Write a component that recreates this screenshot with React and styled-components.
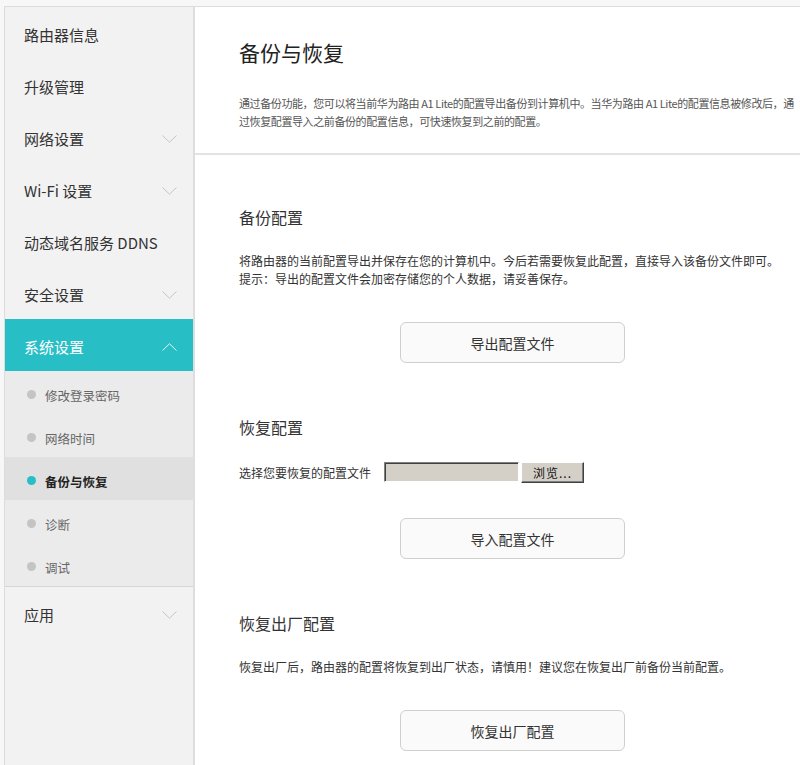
import React from "react";
import styled, { createGlobalStyle } from "styled-components";

const Global = createGlobalStyle`
  html, body { margin: 0; padding: 0; }
  body {
    background: #f7f7f7;
    font-family: "Noto Sans CJK SC", "Noto Sans", "Liberation Sans", sans-serif;
    color: #333;
    overflow: hidden;
  }
`;

const Page = styled.div`
  display: flex;
  align-items: stretch;
  padding: 6px 0 0 4px;
  min-height: 765px;
  box-sizing: border-box;
`;

const Sidebar = styled.nav`
  width: 191px;
  flex: none;
  box-sizing: border-box;
  background: #f2f2f2;
  border-top: 1px solid #dcdcdc;
  border-left: 1px solid #dcdcdc;
  border-right: 2px solid #dedede;
`;

const NavItem = styled.div`
  height: 52px;
  display: flex;
  align-items: center;
  justify-content: space-between;
  padding: 3px 16px 0 19px;
  box-sizing: border-box;
  font-size: 15px;
  color: ${(p) => (p.$active ? "#fff" : "#333")};
  background: ${(p) => (p.$active ? "#28bec6" : "transparent")};
`;

const SubList = styled.div`
  background: #ebebeb;
  border-bottom: 1px solid #d6d6d6;
`;

const SubItem = styled.div`
  height: 43px;
  box-sizing: border-box;
  padding: 5px 0 0 22px;
  display: flex;
  align-items: center;
  gap: 9px;
  font-size: 12.5px;
  color: ${(p) => (p.$active ? "#222" : "#666")};
  font-weight: ${(p) => (p.$active ? 600 : 400)};
  background: ${(p) => (p.$active ? "#e0e0e0" : "transparent")};
`;

const Dot = styled.span`
  width: 9px;
  height: 9px;
  border-radius: 50%;
  margin-top: -1px;
  background: ${(p) => (p.$active ? "#28bec6" : "#c4c4c4")};
`;

const Main = styled.main`
  flex: 1;
  background: #fff;
  border-top: 1px solid #dcdcdc;
  min-width: 0;
`;

const Header = styled.header`
  padding: 30px 0 23px 44px;
  border-bottom: 2px solid #e3e3e3;
`;

const Title = styled.h1`
  margin: 0 0 27px;
  font-size: 21px;
  line-height: 30px;
  font-weight: 400;
  color: #222;
`;

const Desc = styled.p`
  margin: 0;
  font-size: 11px;
  line-height: 18px;
  color: #555;
  max-width: 560px;
  letter-spacing: -0.4px;
`;

const Content = styled.div`
  padding: 50px 0 0 44px;
`;

const Section = styled.section`
  margin-bottom: 52px;
`;

const SectionTitle = styled.h2`
  margin: 0 0 23px;
  font-size: 16px;
  line-height: 24px;
  font-weight: 400;
  color: #333;
`;

const Text = styled.p`
  margin: 0 0 34px;
  font-size: 12px;
  line-height: 18px;
  color: #333;
`;

const Row = styled.div`
  display: flex;
  align-items: center;
  height: 20px;
  margin-bottom: 36px;
  font-size: 12px;
  color: #333;
`;

const Label = styled.span`
  width: 145px;
`;

const FileBox = styled.span`
  width: 135px;
  height: 20px;
  box-sizing: border-box;
  background: #d4d0c8;
  border-top: 1px solid #808080;
  border-left: 1px solid #808080;
  border-right: 1px solid #fff;
  border-bottom: 1px solid #fff;
  box-shadow: inset 1px 1px 0 #404040;
`;

const BrowseBtn = styled.button`
  margin-left: 2px;
  width: 63px;
  height: 21px;
  box-sizing: border-box;
  padding: 0;
  background: #d4d0c8;
  border-top: 1px solid #fff;
  border-left: 1px solid #fff;
  border-right: 1px solid #404040;
  border-bottom: 1px solid #404040;
  box-shadow: inset -1px -1px 0 #808080;
  font-family: inherit;
  font-size: 12px;
  color: #111;
  letter-spacing: 1px;
`;

const ActionButton = styled.button`
  display: block;
  margin-left: 161px;
  width: 225px;
  height: 41px;
  border: 1px solid #cfcfcf;
  border-radius: 6px;
  background: #fafafa;
  font-family: inherit;
  font-size: 14px;
  color: #333;
`;

const Chevron = ({ up }) => (
  <svg width="15" height="8" viewBox="0 0 15 8" fill="none">
    <path
      d={up ? "M0.5 7.5 L7.5 0.8 L14.5 7.5" : "M0.5 0.5 L7.5 7.2 L14.5 0.5"}
      stroke={up ? "#e6f8f9" : "#c4c4c4"}
      strokeWidth="1"
    />
  </svg>
);

const navTop = [
  { label: "路由器信息" },
  { label: "升级管理" },
  { label: "网络设置", chevron: true },
  { label: "Wi-Fi 设置", chevron: true },
  { label: "动态域名服务 DDNS" },
  { label: "安全设置", chevron: true },
];

const subItems = ["修改登录密码", "网络时间", "备份与恢复", "诊断", "调试"];

export default function App() {
  return (
    <>
      <Global />
      <Page>
        <Sidebar>
          {navTop.map((n) => (
            <NavItem key={n.label}>
              <span>{n.label}</span>
              {n.chevron && <Chevron />}
            </NavItem>
          ))}
          <NavItem $active>
            <span>系统设置</span>
            <Chevron up />
          </NavItem>
          <SubList>
            {subItems.map((s) => (
              <SubItem key={s} $active={s === "备份与恢复"}>
                <Dot $active={s === "备份与恢复"} />
                {s}
              </SubItem>
            ))}
          </SubList>
          <NavItem>
            <span>应用</span>
            <Chevron />
          </NavItem>
        </Sidebar>
        <Main>
          <Header>
            <Title>备份与恢复</Title>
            <Desc>
              通过备份功能，您可以将当前华为路由 A1 Lite的配置导出备份到计算机中。当华为路由 A1 Lite的配置信息被修改后，通过恢复配置导入之前备份的配置信息，可快速恢复到之前的配置。
            </Desc>
          </Header>
          <Content>
            <Section>
              <SectionTitle>备份配置</SectionTitle>
              <Text>
                将路由器的当前配置导出并保存在您的计算机中。今后若需要恢复此配置，直接导入该备份文件即可。
                <br />
                提示：导出的配置文件会加密存储您的个人数据，请妥善保存。
              </Text>
              <ActionButton>导出配置文件</ActionButton>
            </Section>
            <Section>
              <SectionTitle>恢复配置</SectionTitle>
              <Row>
                <Label>选择您要恢复的配置文件</Label>
                <FileBox />
                <BrowseBtn>浏览...</BrowseBtn>
              </Row>
              <ActionButton>导入配置文件</ActionButton>
            </Section>
            <Section>
              <SectionTitle>恢复出厂配置</SectionTitle>
              <Text>恢复出厂后，路由器的配置将恢复到出厂状态，请慎用！建议您在恢复出厂前备份当前配置。</Text>
              <ActionButton>恢复出厂配置</ActionButton>
            </Section>
          </Content>
        </Main>
      </Page>
    </>
  );
}
